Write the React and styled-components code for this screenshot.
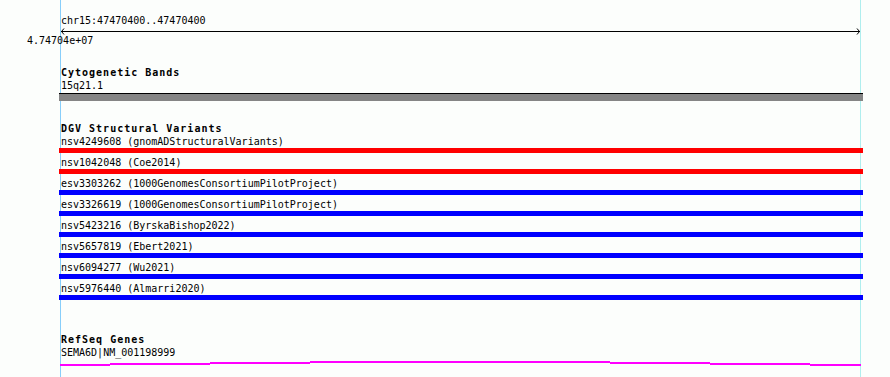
import React from 'react';
import styled, { createGlobalStyle } from 'styled-components';

const GlobalStyle = createGlobalStyle`
  html, body {
    margin: 0;
    padding: 0;
    background: #fcfefc;
  }
  body {
    font-family: "DejaVu Sans Mono", "Liberation Mono", monospace;
    font-size: 10px;
    color: #000;
  }
`;

const Page = styled.div`
  height: 377px;
  overflow: hidden;
`;

const Canvas = styled.main`
  box-sizing: border-box;
  width: 801px;
  min-height: 377px;
  margin-left: 60px;
  padding-top: 15px;
  border-left: 1px solid #87cefa;
  border-right: 1px solid #afeeee;
  display: flex;
  flex-direction: column;
`;

const Ruler = styled.section`
  display: flex;
  flex-direction: column;
`;

const Text = styled.div`
  line-height: 12px;
  white-space: pre;
`;

const AxisLabel = styled(Text)`
  margin-left: -34px;
`;

const Axis = styled.svg`
  display: block;
  margin-left: -1px;
  width: 801px;
  height: 8px;
`;

const Track = styled.section`
  display: flex;
  flex-direction: column;
  margin-top: ${p => p.$gap}px;
`;

const TrackTitle = styled.h2`
  margin: 0;
  font-size: 10px;
  font-weight: bold;
  letter-spacing: 1px;
  line-height: 12px;
`;

const Feature = styled.div`
  display: flex;
  flex-direction: column;
  margin-top: 1px;
  & + & {
    margin-top: 4px;
  }
`;

const FeatureLabel = styled(Text)`
  margin-bottom: ${p => p.$space || 0}px;
`;

const Bar = styled.div`
  height: ${p => p.$h}px;
  margin: 0 -3px 0 -2px;
  background: ${p => p.$color};
  border-top: ${p => (p.$edge ? '1px solid #000' : 'none')};
`;

const GeneLine = styled.svg`
  display: block;
  margin-left: -2px;
  width: 802px;
  height: 8px;
`;

const variants = [
  ['nsv4249608 (gnomADStructuralVariants)', '#ff0000'],
  ['nsv1042048 (Coe2014)', '#ff0000'],
  ['esv3303262 (1000GenomesConsortiumPilotProject)', '#0000ff'],
  ['esv3326619 (1000GenomesConsortiumPilotProject)', '#0000ff'],
  ['nsv5423216 (ByrskaBishop2022)', '#0000ff'],
  ['nsv5657819 (Ebert2021)', '#0000ff'],
  ['nsv6094277 (Wu2021)', '#0000ff'],
  ['nsv5976440 (Almarri2020)', '#0000ff'],
];

// gene model drawn as a slightly arched line, in steps of 100px
const geneSteps = [
  [1, 51, 6], [51, 151, 5], [151, 251, 4], [251, 551, 3],
  [551, 651, 4], [651, 751, 5], [751, 802, 6],
];

function App() {
  return (
    <Page>
      <GlobalStyle />
      <Canvas>
        <Ruler>
          <Text>chr15:47470400..47470400</Text>
          <Axis viewBox="0 0 801 8">
            <line x1="1" y1="4.5" x2="800" y2="4.5" stroke="#000" strokeWidth="1" />
            <polyline points="4,1.5 1.5,4.5 4,7.5" fill="none" stroke="#000" strokeWidth="1" />
            <polyline points="797,1.5 799.5,4.5 797,7.5" fill="none" stroke="#000" strokeWidth="1" />
          </Axis>
          <AxisLabel>4.74704e+07</AxisLabel>
        </Ruler>

        <Track $gap={20}>
          <TrackTitle>Cytogenetic Bands</TrackTitle>
          <Feature>
            <FeatureLabel $space={1}>15q21.1</FeatureLabel>
            <Bar $h={7} $color="#858585" $edge />
          </Feature>
        </Track>

        <Track $gap={22}>
          <TrackTitle>DGV Structural Variants</TrackTitle>
          {variants.map(([label, color]) => (
            <Feature key={label}>
              <FeatureLabel>{label}</FeatureLabel>
              <Bar $h={5} $color={color} />
            </Feature>
          ))}
        </Track>

        <Track $gap={34}>
          <TrackTitle>RefSeq Genes</TrackTitle>
          <Feature>
            <FeatureLabel>SEMA6D|NM_001198999</FeatureLabel>
            <GeneLine viewBox="0 0 802 8">
              {geneSteps.map(([a, b, y]) => (
                <line key={a} x1={a} y1={y} x2={b} y2={y} stroke="#ff00ff" strokeWidth="2" />
              ))}
            </GeneLine>
          </Feature>
        </Track>
      </Canvas>
    </Page>
  );
}

export default App;
